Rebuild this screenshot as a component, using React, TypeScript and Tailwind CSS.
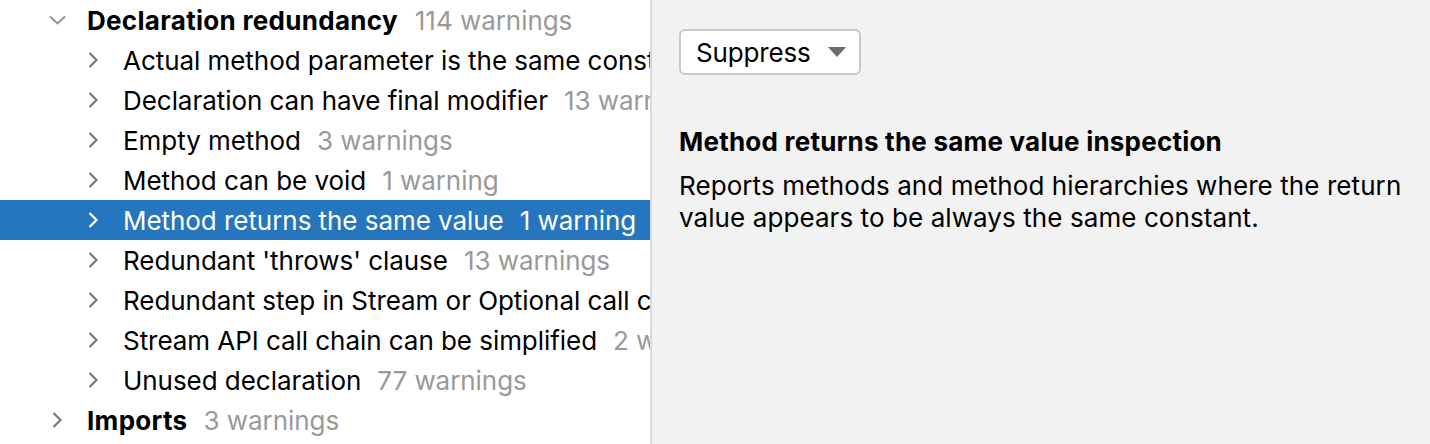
const rows: { label: string; count: string; selected?: boolean }[] = [
  { label: "Actual method parameter is the same constant", count: "2 warnings" },
  { label: "Declaration can have final modifier", count: "13 warnings" },
  { label: "Empty method", count: "3 warnings" },
  { label: "Method can be void", count: "1 warning" },
  { label: "Method returns the same value", count: "1 warning", selected: true },
  { label: "Redundant 'throws' clause", count: "13 warnings" },
  { label: "Redundant step in Stream or Optional call chain", count: "5 warnings" },
  { label: "Stream API call chain can be simplified", count: "2 warnings" },
  { label: "Unused declaration", count: "77 warnings" },
];

function ChevronRight({ className }: { className?: string }) {
  return (
    <svg width="12" height="18" viewBox="0 0 12 18" className={className}>
      <path d="M2.5 2 L9.5 9 L2.5 16" fill="none" stroke="currentColor" strokeWidth="2.2" />
    </svg>
  );
}

function ChevronDown({ className }: { className?: string }) {
  return (
    <svg width="18" height="12" viewBox="0 0 18 12" className={className}>
      <path d="M2 2.5 L9.5 9.5 L17 2.5" fill="none" stroke="currentColor" strokeWidth="1.8" />
    </svg>
  );
}

export default function App() {
  return (
    <div className="flex h-[444px] w-[1430px] overflow-hidden font-['Inter',sans-serif] text-[26px] tracking-[-0.05px] text-black">
      <div className="w-[652px] shrink-0 overflow-hidden bg-white border-r-2 border-[#d9d9d9]">
        <div className="flex h-10 items-center whitespace-nowrap">
          <ChevronDown className="ml-[48px] mr-[21px] shrink-0 text-[#8e8e8e]" />
          <span className="font-bold tracking-[0.3px]">Declaration redundancy</span>
          <span className="ml-[17px] text-[#999999]">114 warnings</span>
        </div>
        {rows.map((r) => (
          <div
            key={r.label}
            className={
              r.selected
                ? "flex h-10 items-center whitespace-nowrap bg-[#2675bf] text-white"
                : "flex h-10 items-center whitespace-nowrap"
            }
          >
            <ChevronRight
              className={
                r.selected
                  ? "ml-[87px] mr-[24px] shrink-0 text-white"
                  : "ml-[87px] mr-[24px] shrink-0 text-[#7a7a7a]"
              }
            />
            <span>{r.label}</span>
            <span className={r.selected ? "ml-4 text-white" : "ml-4 text-[#999999]"}>{r.count}</span>
          </div>
        ))}
        <div className="flex h-10 items-center whitespace-nowrap">
          <ChevronRight className="ml-[51px] mr-[24px] shrink-0 text-[#7a7a7a]" />
          <span className="font-bold tracking-[0.3px]">Imports</span>
          <span className="ml-4 text-[#999999]">3 warnings</span>
        </div>
      </div>
      <div className="flex-1 bg-[#f2f2f2] pl-[27px] pt-[29px]">
        <button className="flex h-[46px] w-[182px] items-center rounded-md border-2 border-[#c8c8c8] bg-white pl-[15px] text-[26px] tracking-[-0.15px]">
          <span>Suppress</span>
          <svg width="18" height="10" viewBox="0 0 18 10" className="ml-[17px] shrink-0">
            <path d="M0 0 L18 0 L9 10 Z" fill="#6b6b6b" />
          </svg>
        </button>
        <div className="mt-[47px] font-bold tracking-[0.22px]">Method returns the same value inspection</div>
        <p className="mt-[9px] max-w-[740px] leading-8 tracking-[0.08px]">
          Reports methods and method hierarchies where the return value appears to be always the same constant.
        </p>
      </div>
    </div>
  );
}
